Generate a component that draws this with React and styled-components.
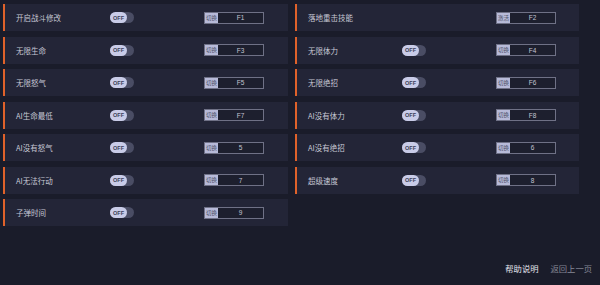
import styled, { createGlobalStyle } from 'styled-components';

const GlobalStyle = createGlobalStyle`
  html, body {
    margin: 0;
    padding: 0;
    background: #1a1c2a;
  }
  body {
    font-family: "Noto Sans CJK SC", "Noto Sans", sans-serif;
  }
`;

const cheats = [
  { name: '开启战斗修改', key: 'F1', toggle: true },
  { name: '落地重击技能', key: 'F2', toggle: false, action: '激活' },
  { name: '无限生命', key: 'F3', toggle: true },
  { name: '无限体力', key: 'F4', toggle: true },
  { name: '无限怒气', key: 'F5', toggle: true },
  { name: '无限绝招', key: 'F6', toggle: true },
  { name: 'AI生命最低', key: 'F7', toggle: true },
  { name: 'AI没有体力', key: 'F8', toggle: true },
  { name: 'AI没有怒气', key: '5', toggle: true },
  { name: 'AI没有绝招', key: '6', toggle: true },
  { name: 'AI无法行动', key: '7', toggle: true },
  { name: '超级速度', key: '8', toggle: true },
  { name: '子弹时间', key: '9', toggle: true },
];

const Toggle = () => (
  <ToggleTrack>
    <ToggleKnob>OFF</ToggleKnob>
  </ToggleTrack>
);

const HotKey = ({ action = '切换', value }) => (
  <HotKeyBox>
    <HotKeyTag>{action}</HotKeyTag>
    <HotKeyValue>{value}</HotKeyValue>
  </HotKeyBox>
);

const CheatRow = ({ item }) => (
  <Row>
    <Label>{item.name}</Label>
    <ToggleSlot>{item.toggle && <Toggle />}</ToggleSlot>
    <HotKey action={item.action} value={item.key} />
  </Row>
);

const App = () => {
  return (
    <Page>
      <GlobalStyle />
      <Grid>
        {cheats.map((item) => (
          <CheatRow key={item.name} item={item} />
        ))}
      </Grid>
      <Footer>
        <FooterLink $active>帮助说明</FooterLink>
        <FooterLink>返回上一页</FooterLink>
      </Footer>
    </Page>
  );
};

export default App;

const Page = styled.div`
  width: 600px;
  height: 285px;
  box-sizing: border-box;
  padding: 4px 0 0 3px;
  display: flex;
  flex-direction: column;
  background: #1a1c2a;
  overflow: hidden;
`;

const Grid = styled.div`
  display: grid;
  grid-template-columns: 285px 284px;
  column-gap: 7px;
  row-gap: 5.5px;
`;

const Row = styled.div`
  height: 27px;
  display: flex;
  align-items: center;
  box-sizing: border-box;
  padding-left: 11px;
  background: #232537;
  border-left: 2px solid #e0622a;
`;

const Label = styled.span`
  width: 94px;
  font-size: 7.5px;
  color: #c6c7d4;
  white-space: nowrap;
`;

const ToggleSlot = styled.div`
  width: 24px;
  height: 11px;
  margin-right: 70px;
`;

const ToggleTrack = styled.div`
  width: 24px;
  height: 11px;
  border-radius: 6px;
  background: #4a4d64;
  display: flex;
  align-items: center;
`;

const ToggleKnob = styled.div`
  width: 17px;
  height: 11px;
  border-radius: 6px;
  background: #c9cce8;
  color: #3b3e57;
  font-family: "Liberation Sans", Arial, sans-serif;
  font-size: 5.5px;
  font-weight: bold;
  display: flex;
  align-items: center;
  justify-content: center;
`;

const HotKeyBox = styled.div`
  width: 60px;
  height: 12px;
  box-sizing: border-box;
  border: 1px solid #6f7186;
  display: flex;
  align-items: stretch;
  background: #1d1f2e;
`;

const HotKeyTag = styled.span`
  width: 13px;
  background: #b7bad8;
  color: #4a4d66;
  font-size: 5.5px;
  display: flex;
  align-items: center;
  justify-content: center;
  white-space: nowrap;
`;

const HotKeyValue = styled.span`
  flex: 1;
  color: #c3c4d2;
  font-family: "Liberation Sans", Arial, sans-serif;
  font-size: 6.5px;
  display: flex;
  align-items: center;
  justify-content: center;
`;

const Footer = styled.div`
  margin-top: auto;
  margin-bottom: 11px;
  align-self: flex-end;
  margin-right: 8px;
  display: flex;
  gap: 12px;
`;

const FooterLink = styled.span`
  font-size: 8.3px;
  color: ${(p) => (p.$active ? '#e4e5ee' : '#868897')};
`;
